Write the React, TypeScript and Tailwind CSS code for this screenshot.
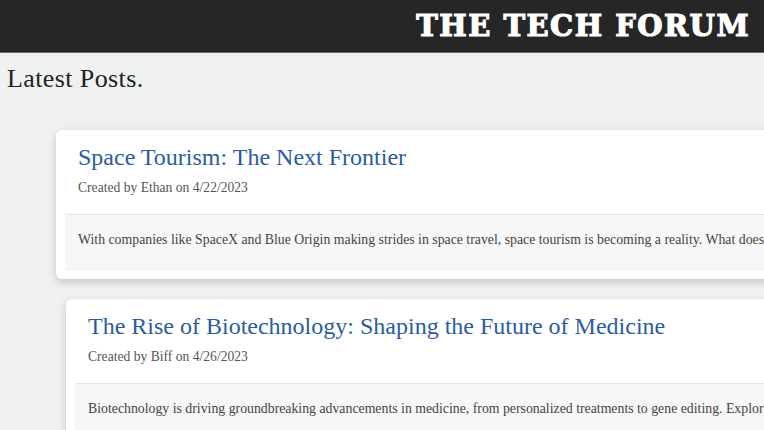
const posts = [
  {
    title: "Space Tourism: The Next Frontier",
    author: "Ethan",
    date: "4/22/2023",
    body: "With companies like SpaceX and Blue Origin making strides in space travel, space tourism is becoming a reality. What does the future hold for everyday travelers who dream of visiting the stars?",
    indent: "ml-[56px]",
  },
  {
    title: "The Rise of Biotechnology: Shaping the Future of Medicine",
    author: "Biff",
    date: "4/26/2023",
    body: "Biotechnology is driving groundbreaking advancements in medicine, from personalized treatments to gene editing. Explore how these innovations are changing healthcare.",
    indent: "ml-[66px]",
  },
];

export default function App() {
  return (
    <div className="min-h-[430px] w-full overflow-hidden bg-[#eff0f0] font-['Liberation_Serif',serif]">
      <header className="flex h-[53px] items-center justify-end border-b border-[#6b6b6b] bg-[#262626] pr-[14px]">
        <h1 className="font-['DejaVu_Serif',serif] text-[29px] font-bold leading-none tracking-[1.5px] text-white [-webkit-text-stroke:1.2px_white]">
          THE TECH FORUM
        </h1>
      </header>
      <main className="pt-[10px]">
        <h2 className="pl-[7px] text-[26px] leading-[32px] tracking-[0.4px] text-[#222]">Latest Posts.</h2>
        <div className="mt-[35px] flex flex-col gap-[20px]">
          {posts.map((post) => (
            <article
              key={post.title}
              className={`${post.indent} w-[760px] shrink-0 rounded-[6px] bg-white px-[9px] pb-[8px] pt-[12px] shadow-[0_3px_8px_rgba(0,0,0,0.18)]`}
            >
              <h3 className="pl-[13px] text-[24px] leading-[30px] text-[#2b5d9e]">{post.title}</h3>
              <p className="mt-[8px] pl-[13px] text-[13.6px] leading-[16px] text-[#555]">
                Created by {post.author} on {post.date}
              </p>
              <div className="mt-[18px] flex h-[57px] items-center overflow-hidden border-t border-[#e6e6e6] bg-[#f7f7f7] pl-[13px]">
                <p className="whitespace-nowrap pb-[6px] text-[13.8px] text-[#444]">{post.body}</p>
              </div>
            </article>
          ))}
        </div>
      </main>
    </div>
  );
}
